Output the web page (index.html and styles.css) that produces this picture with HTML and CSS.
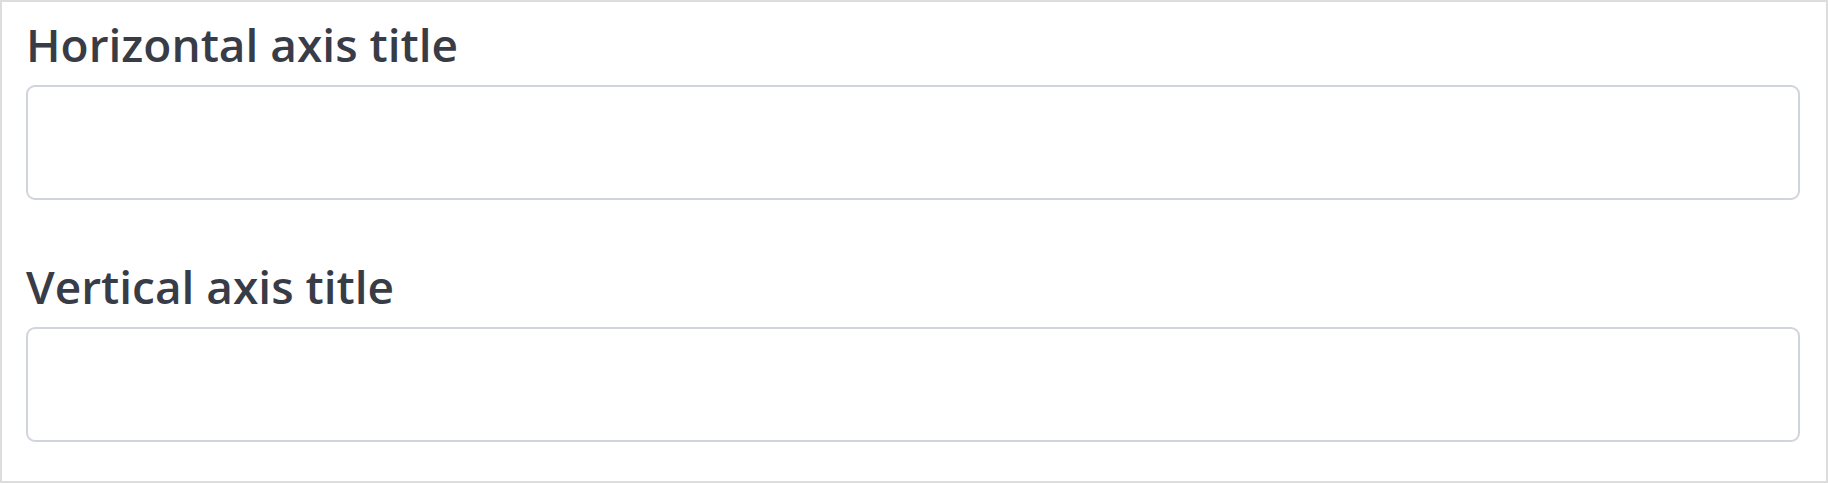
FILE: index.html
```html
<!DOCTYPE html>
<html lang="en">
<head>
<meta charset="utf-8">
<title>Axis titles</title>
<link rel="stylesheet" href="styles.css">
</head>
<body>
  <div class="panel">
    <div class="field">
      <label class="field-label" for="h-title">Horizontal axis title</label>
      <input class="field-input" id="h-title" type="text">
    </div>
    <div class="field">
      <label class="field-label" for="v-title">Vertical axis title</label>
      <input class="field-input" id="v-title" type="text">
    </div>
  </div>
</body>
</html>
```

FILE: styles.css
```css
html, body {
  margin: 0;
  padding: 0;
  background: #ffffff;
}

.panel {
  box-sizing: border-box;
  width: 1828px;
  height: 483px;
  border: 2px solid #dddddd;
  padding: 14px 26px 0 24px;
  display: flex;
  flex-direction: column;
  gap: 58px;
  font-family: "Open Sans", "Noto Sans", sans-serif;
}

.field {
  display: flex;
  flex-direction: column;
}

.field-label {
  font-size: 46px;
  font-weight: 600;
  line-height: 56px;
  color: #383c47;
  margin-bottom: 13px;
}

.field-input {
  box-sizing: border-box;
  width: 100%;
  height: 115px;
  margin: 0;
  border: 2px solid #d0d5dc;
  border-radius: 9px;
  background: #ffffff;
  outline: none;
  font: inherit;
  font-size: 40px;
  padding: 0 16px;
}
```
